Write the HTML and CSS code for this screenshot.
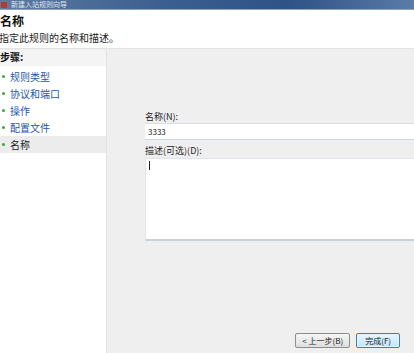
FILE: index.html
```html
<!DOCTYPE html>
<html lang="zh">
<head>
<meta charset="utf-8">
<link rel="stylesheet" href="styles.css">
</head>
<body>
<div class="window">
  <div class="titlebar">
    <span class="ticon"></span>
    <span class="ttext">新建入站规则向导</span>
  </div>
  <div class="header">
    <div class="htitle">名称</div>
    <div class="hsub">指定此规则的名称和描述。</div>
  </div>
  <div class="main">
    <div class="steps">
      <div class="stephead">步骤:</div>
      <div class="step"><span class="dot"></span><span class="link">规则类型</span></div>
      <div class="step"><span class="dot"></span><span class="link">协议和端口</span></div>
      <div class="step"><span class="dot"></span><span class="link">操作</span></div>
      <div class="step"><span class="dot"></span><span class="link">配置文件</span></div>
      <div class="step current"><span class="dot"></span><span class="cur">名称</span></div>
    </div>
    <div class="content">
      <div class="form">
        <div class="label">名称(N):</div>
        <div class="input">3333</div>
        <div class="label l2">描述(可选)(D):</div>
        <div class="textarea"><span class="caret"></span></div>
      </div>
      <div class="buttons">
        <div class="btn">&lt; 上一步(B)</div>
        <div class="btn primary">完成(F)</div>
      </div>
    </div>
  </div>
</div>
</body>
</html>
```
FILE: styles.css
```css
html, body {
  margin: 0;
  padding: 0;
  width: 414px;
  height: 353px;
  overflow: hidden;
  font-family: "Noto Sans CJK SC", "Liberation Sans", sans-serif;
  background: #fff;
}
.window {
  display: flex;
  flex-direction: column;
  height: 353px;
}
.titlebar {
  height: 9px;
  background: linear-gradient(90deg, #5e7aa0 0%, #3b5f90 40%, #2f5287 70%, #5b7ca8 100%);
  display: flex;
  align-items: center;
  border-bottom: 1px solid #8fa3bd;
}
.ticon {
  width: 6px;
  height: 6px;
  background: #b83a2a;
  margin-left: 1px;
}
.ttext {
  font-size: 7px;
  color: #dfe6ef;
  margin-left: 4px;
  line-height: 9px;
}
.header {
  height: 38px;
  background: #fff;
  border-bottom: 1px solid #e3e3e3;
  box-shadow: 0 1px 0 #f8f8f8;
}
.htitle {
  font-size: 12px;
  font-weight: bold;
  color: #111;
  margin-top: 3px;
  line-height: 16px;
}
.hsub {
  font-size: 10px;
  color: #222;
  margin-top: 2px;
  line-height: 14px;
  margin-left: -1px;
}
.main {
  flex: 1;
  display: flex;
  background: #efefef;
  padding-top: 1px;
}
.steps {
  width: 106px;
  background: #fff;
  border-right: 1px solid #e2e2e2;
  margin-right: 2px;
}
.stephead {
  font-size: 10px;
  font-weight: bold;
  color: #111;
  height: 16px;
  line-height: 14px;
  background: #f4f4f4;
  margin-bottom: 2px;
}
.step {
  height: 17px;
  display: flex;
  align-items: center;
  font-size: 10px;
  line-height: 17px;
}
.dot {
  width: 3px;
  height: 3px;
  border-radius: 50%;
  background: #3fa53a;
  margin-left: 2px;
  margin-right: 5px;
}
.link { color: #1f56a8; }
.cur { color: #222; }
.step.current { background: #ececec; }
.content {
  flex: 1;
  display: flex;
  flex-direction: column;
  justify-content: space-between;
}
.form {
  padding-left: 36px;
  padding-top: 61px;
}
.label {
  font-size: 9px;
  color: #222;
  line-height: 12px;
  height: 12px;
}
.l2 { margin-top: 5px; }
.input {
  height: 15px;
  background: #fff;
  border-top: 1px solid #d8dde3;
  border-bottom: 1px solid #c9d4de;
  font-size: 8px;
  line-height: 15px;
  padding-left: 3px;
  color: #222;
}
.textarea {
  height: 78px;
  margin-top: 1px;
  background: #fff;
  border: 1px solid #dfe5ea;
  border-right: none;
  border-bottom: 2px solid #c6d2de;
  padding-left: 3px;
  padding-top: 2px;
}
.caret {
  display: block;
  width: 1px;
  height: 9px;
  background: #222;
}
.buttons {
  display: flex;
  justify-content: flex-end;
  gap: 6px;
  padding-right: 14px;
  padding-bottom: 5px;
}
.btn {
  height: 13px;
  line-height: 13px;
  font-size: 8px;
  color: #222;
  padding: 0 6px;
  border: 1px solid #8d8d8d;
  border-radius: 2px;
  background: linear-gradient(#f6f6f6, #dedede);
}
.primary {
  border: 1px solid #3c7fb1;
  background: linear-gradient(#eaf6fd, #bee6fd);
  box-shadow: inset 0 0 0 1px #e6f4fc;
  padding: 0 8px;
}
```
